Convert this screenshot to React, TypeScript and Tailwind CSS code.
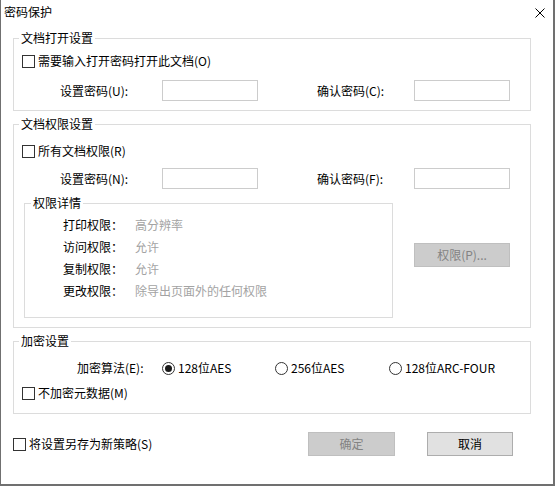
import React from "react";

const font = { fontFamily: '"Noto Sans CJK SC", "Noto Sans", sans-serif' };

function Checkbox({ label }: { label: string }) {
  return (
    <div className="flex h-[16px] items-center">
      <span className="box-border h-[13px] w-[13px] border border-[#333333] bg-white" />
      <span className="ml-[3px] whitespace-nowrap">{label}</span>
    </div>
  );
}

function Radio({ label, checked, w }: { label: string; checked?: boolean; w: string }) {
  return (
    <div className={`flex h-[16px] items-center ${w}`}>
      <span className="box-border flex h-[13px] w-[13px] items-center justify-center rounded-full border border-[#333333] bg-white">
        {checked && <span className="h-[7px] w-[7px] rounded-full bg-[#1a1a1a]" />}
      </span>
      <span className="ml-[3px] whitespace-nowrap">{label}</span>
    </div>
  );
}

function Input() {
  return <div className="box-border h-[21px] w-[96px] border border-[#cccccc] bg-white" />;
}

function PwdRow({ a, b }: { a: string; b: string }) {
  return (
    <div className="flex h-[21px] items-center">
      <span className="ml-[46px] w-[102px] whitespace-nowrap">{a}</span>
      <Input />
      <span className="ml-[59px] w-[97px] whitespace-nowrap">{b}</span>
      <Input />
    </div>
  );
}

function Legend({ children, inner }: { children: React.ReactNode; inner?: boolean }) {
  return (
    <legend className={`${inner ? "ml-[6px]" : "ml-[5px]"} px-[2px] leading-[16px] h-[16px]`}>
      {children}
    </legend>
  );
}

export default function App() {
  const perms: [string, string][] = [
    ["打印权限：", "高分辨率"],
    ["访问权限：", "允许"],
    ["复制权限：", "允许"],
    ["更改权限：", "除导出页面外的任何权限"],
  ];
  return (
    <div
      style={font}
      className="box-border flex h-[486px] w-[555px] flex-col border-b-2 border-l border-r-2 border-[#707070] bg-white text-[12px] leading-[16px] text-black"
    >
      <div className="flex h-[24px] items-center justify-between pl-[3px] pr-[8px]">
        <span>密码保护</span>
        <svg width="10" height="10" viewBox="0 0 10 10" className="mt-[1px]">
          <path d="M0.5 0.5 L9.5 9.5 M9.5 0.5 L0.5 9.5" stroke="#000" strokeWidth="1" />
        </svg>
      </div>

      <div className="flex flex-col px-[12px]">
        {/* 文档打开设置 */}
        <fieldset className="mt-[6px] box-border w-[518px] border border-[#dcdcdc]">
          <Legend>文档打开设置</Legend>
          <div className="flex flex-col pb-[9px]">
            <div className="mt-[7px] pl-[8px]">
              <Checkbox label="需要输入打开密码打开此文档(O)" />
            </div>
            <div className="mt-[11px]">
              <PwdRow a="设置密码(U):" b="确认密码(C):" />
            </div>
          </div>
        </fieldset>

        {/* 文档权限设置 */}
        <fieldset className="mt-[5px] box-border w-[518px] border border-[#dcdcdc]">
          <Legend>文档权限设置</Legend>
          <div className="flex flex-col pb-[9px]">
            <div className="mt-[11px] pl-[8px]">
              <Checkbox label="所有文档权限(R)" />
            </div>
            <div className="mt-[9px]">
              <PwdRow a="设置密码(N):" b="确认密码(F):" />
            </div>
            <div className="mt-[6px] flex">
              <fieldset className="ml-[10px] box-border w-[369px] border border-[#dcdcdc]">
                <Legend inner>权限详情</Legend>
                <div className="mt-[3px] flex flex-col pb-[15px]">
                  {perms.map(([k, v]) => (
                    <div key={k} className="flex h-[22px] items-center pl-[38px]">
                      <span className="w-[72px] whitespace-nowrap">{k}</span>
                      <span className="whitespace-nowrap text-[#a3a3a3]">{v}</span>
                    </div>
                  ))}
                </div>
              </fieldset>
              <div className="ml-[21px] mt-[48px] box-border flex h-[24px] w-[96px] items-center justify-center self-start border border-[#bfbfbf] bg-[#cccccc] text-[#838383]">
                权限(P)...
              </div>
            </div>
          </div>
        </fieldset>

        {/* 加密设置 */}
        <fieldset className="mt-[5px] box-border w-[518px] border border-[#dcdcdc]">
          <Legend>加密设置</Legend>
          <div className="flex flex-col pb-[12px]">
            <div className="mt-[11px] flex h-[16px] items-center">
              <span className="ml-[63px] w-[85px] whitespace-nowrap">加密算法(E):</span>
              <Radio label="128位AES" checked w="w-[113px]" />
              <Radio label="256位AES" w="w-[114px]" />
              <Radio label="128位ARC-FOUR" w="w-[120px]" />
            </div>
            <div className="mt-[9px] pl-[8px]">
              <Checkbox label="不加密元数据(M)" />
            </div>
          </div>
        </fieldset>

        {/* bottom */}
        <div className="mt-[18px] flex h-[24px] items-center">
          <Checkbox label="将设置另存为新策略(S)" />
          <div className="ml-auto box-border flex h-[24px] w-[87px] items-center justify-center border border-[#bfbfbf] bg-[#cccccc] text-[#838383]">
            确定
          </div>
          <div className="ml-[32px] mr-[28px] box-border flex h-[24px] w-[86px] items-center justify-center border border-[#adadad] bg-[#e1e1e1]">
            取消
          </div>
        </div>
      </div>
    </div>
  );
}
